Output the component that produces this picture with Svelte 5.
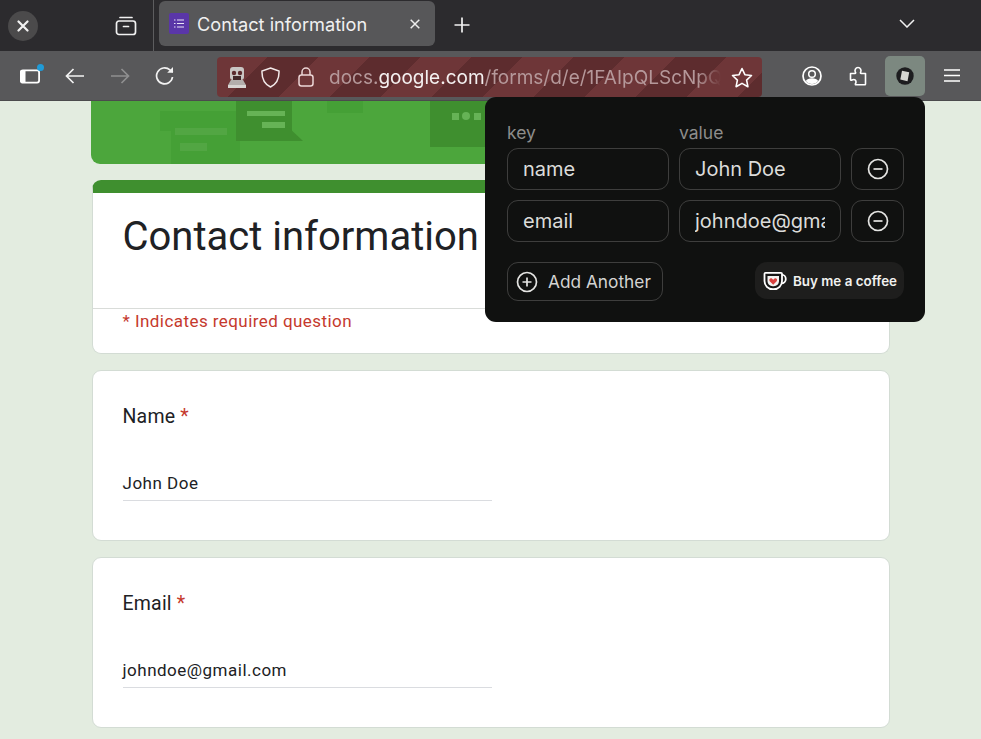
<script>
  const rows = [
    { key: 'name', value: 'John Doe' },
    { key: 'email', value: 'johndoe@gmail.com' }
  ];
  const questions = [
    { label: 'Name', answer: 'John Doe' },
    { label: 'Email', answer: 'johndoe@gmail.com' }
  ];
</script>

<div class="window">
  <header class="tabstrip">
    <div class="close-circle">
      <svg width="12" height="12" viewBox="0 0 12 12"><path d="M1.5 1.5l9 9M10.5 1.5l-9 9" stroke="#f2f2f2" stroke-width="2.2" stroke-linecap="round"/></svg>
    </div>
    <svg class="archive" width="22" height="20" viewBox="0 0 22 20" fill="none" stroke="#f1f1f1" stroke-width="1.7" stroke-linecap="round">
      <path d="M5 1.5h12"/>
      <rect x="1.5" y="5" width="19" height="13.5" rx="2.5"/>
      <path d="M8.5 10.5h5"/>
    </svg>
    <div class="sep"></div>
    <div class="tab">
      <div class="favicon">
        <svg width="10" height="9" viewBox="0 0 10 9" fill="none" stroke="#e9e3f7" stroke-width="1"><path d="M3 1h7M3 4.500h7M3 8h7M0 1h1.500M0 4.500h1.500M0 8h1.500"/></svg>
      </div>
      <span class="tab-title">Contact information</span>
      <svg class="tab-x" width="10" height="10" viewBox="0 0 10 10"><path d="M.7.7l8.600 8.600M9.300.7L.7 9.300" stroke="#ececec" stroke-width="1.500"/></svg>
    </div>
    <svg class="plus" width="16" height="16" viewBox="0 0 16 16"><path d="M8 .5v15M.5 8h15" stroke="#f1f1f1" stroke-width="1.700"/></svg>
    <svg class="chev" width="16" height="9" viewBox="0 0 16 9" fill="none"><path d="M1 1l7 7 7-7" stroke="#f1f1f1" stroke-width="1.500"/></svg>
  </header>

  <nav class="toolbar">
    <div class="side-icon">
      <svg width="26" height="22" viewBox="0 0 26 22" fill="none">
        <rect x="2.900" y="6.400" width="18.200" height="12.200" rx="2" stroke="#fff" stroke-width="1.800"/>
        <path d="M4 6h3.500v13H4a2 2 0 0 1-2-2V8a2 2 0 0 1 2-2z" fill="#fff"/>
        <circle cx="22.500" cy="3.500" r="3.500" fill="#1f9bd8"/>
      </svg>
    </div>
    <svg class="nav" width="20" height="16" viewBox="0 0 20 16" fill="none" stroke="#f2f2f2" stroke-width="1.700"><path d="M19 8H2M8.500 1L1.500 8l7 7"/></svg>
    <svg class="nav" width="20" height="16" viewBox="0 0 20 16" fill="none" stroke="#8f8f90" stroke-width="1.700"><path d="M1 8h17M11.500 1l7 7-7 7"/></svg>
    <svg class="nav" width="20" height="20" viewBox="0 0 20 20" fill="none" stroke="#f2f2f2" stroke-width="1.700"><path d="M17.500 11a8 8 0 1 1-2.600-7.100L17.800 6"/><path d="M18 1v5.800h-5.800" fill="#f2f2f2" stroke="none"/></svg>

    <div class="urlbar">
      <svg class="robot" width="22" height="24" viewBox="0 0 22 24">
        <rect x="4" y="2" width="14" height="13" rx="3" fill="#c9c6c4"/>
        <circle cx="8" cy="8" r="2.200" fill="#5b2b2e"/><circle cx="14" cy="8" r="2.200" fill="#5b2b2e"/>
        <rect x="7" y="11" width="8" height="6" fill="#42282a"/>
        <path d="M2 20h18v3H2z" fill="#d8d5d3"/><path d="M5 15h12l3 5H2z" fill="#b3aeac"/>
      </svg>
      <svg class="u-shield" width="19" height="21" viewBox="0 0 19 21" fill="none" stroke="#f3e9e9" stroke-width="1.500"><path d="M9.500 1L18 4c.3 7-1.500 12.500-8.500 16C2.500 16.500.7 11 1 4z"/></svg>
      <svg class="u-lock" width="16" height="20" viewBox="0 0 16 20" fill="none" stroke="#ecd6d6" stroke-width="1.500"><rect x="1" y="8" width="14" height="11" rx="2.500"/><path d="M4 8V5a4 4 0 0 1 8 0v3"/></svg>
      <div class="url"><span class="dim">docs.</span><span class="host">google.com</span><span class="dim">/forms/d/e/1FAIpQLScNpQ</span></div>
      <svg class="u-star" width="22" height="21" viewBox="0 0 22 21" fill="none" stroke="#fff" stroke-width="1.600" stroke-linejoin="round"><path d="M11 1.500l2.900 6.200 6.600.8-4.900 4.600 1.300 6.600L11 16.400l-5.900 3.300 1.300-6.600L1.500 8.500l6.600-.8z"/></svg>
    </div>

    <svg class="t-account" width="20" height="20" viewBox="0 0 20 20" fill="none"><circle cx="10" cy="10" r="9" stroke="#fff" stroke-width="1.700"/><circle cx="10" cy="8" r="3.300" stroke="#fff" stroke-width="1.500"/><path d="M3.800 15c1-2 3.400-2.800 6.200-2.800s5.200.8 6.200 2.800c-1.600 1.900-3.800 3-6.200 3s-4.600-1.100-6.200-3z" fill="#fff"/></svg>
    <svg class="t-ext" width="18" height="20" viewBox="0 0 18 20" fill="none" stroke="#fff" stroke-width="1.600" stroke-linejoin="round"><path d="M1.500 7.500H6c.8 0 .8-.8.300-1.500C5.500 4.500 6.500 1.500 9 1.500s3.500 3 2.700 4.500c-.4.700-.3 1.500.5 1.500h4.300V18a.8.8 0 0 1-.8.800H7c-.8 0-.8-.8-.3-1.500.8-1.300.1-3.800-1.800-3.800-.8 0-1.400.2-2 .5-.6.300-1.400.2-1.400-.5z"/></svg>
    <div class="active-ext">
      <svg width="18" height="18" viewBox="0 0 18 18"><circle cx="9" cy="9" r="8.700" fill="#1d1d1f"/><path d="M6 3.800l7.200 1.400-1.700 9-7.200-1.700z" fill="#d6d6d2"/></svg>
    </div>
    <svg class="t-menu" width="16" height="13" viewBox="0 0 16 13" stroke="#fff" stroke-width="1.500"><path d="M0 1h16M0 6.500h16M0 12h16"/></svg>
  </nav>

  <main class="page">
    <div class="column">
      <div class="banner">
        <svg width="799" height="63" viewBox="0 0 799 63">
          <path d="M69 10h80v53H80V30H69z" fill="#45a036"/>
          <rect x="145" y="0" width="56" height="40" fill="#3f8f2f"/>
          <path d="M196 25l16 15h-16z" fill="#3f8f2f"/>
          <rect x="156" y="10" width="38" height="5" fill="#66b356"/>
          <rect x="171" y="21" width="23" height="6" fill="#66b356"/>
          <rect x="84" y="27" width="52" height="7" fill="#52a643"/>
          <rect x="89" y="42" width="27" height="8" fill="#52a643"/>
          <rect x="236" y="0" width="36" height="12" fill="#45a036"/>
          <rect x="339" y="0" width="60" height="46" fill="#3f8f2f"/>
          <rect x="361" y="12" width="7" height="7" fill="#66b356"/>
          <circle cx="375" cy="15" r="4" fill="#66b356"/>
          <rect x="383" y="12" width="7" height="7" fill="#66b356"/>
        </svg>
      </div>

      <section class="card title-card">
        <h1>Contact information</h1>
        <div class="required-note"><span class="note-text">* Indicates required question</span></div>
      </section>

      {#each questions as q}
        <section class="card question">
          <div class="q-label">{q.label} <span class="star">*</span></div>
          <div class="answer">{q.answer}</div>
        </section>
      {/each}
    </div>
  </main>

  <aside class="popup">
    <div class="grid">
      <div class="col-label">key</div>
      <div class="col-label">value</div>
      <div></div>
      {#each rows as r}
        <div class="field"><span class="field-text">{r.key}</span></div>
        <div class="field"><span class="field-text">{r.value}</span></div>
        <div class="remove">
          <svg width="22" height="22" viewBox="0 0 22 22" fill="none" stroke="#e4e4e2" stroke-width="1.700"><circle cx="11" cy="11" r="9.500"/><path d="M6.500 11h9"/></svg>
        </div>
      {/each}
    </div>
    <div class="actions">
      <div class="add">
        <svg width="22" height="22" viewBox="0 0 22 22" fill="none" stroke="#e4e4e2" stroke-width="1.700"><circle cx="11" cy="11" r="9.500"/><path d="M6.500 11h9M11 6.500v9"/></svg>
        <span>Add Another</span>
      </div>
      <div class="coffee">
        <svg width="25" height="20" viewBox="0 0 25 20" fill="none">
          <circle cx="18.500" cy="8" r="4.300" stroke="#fff" stroke-width="1.800"/>
          <path d="M2.500 1.800h15.500c.6 0 1 .4 1 1v7.200c0 4.500-3.500 8.200-8.200 8.200h-1C5 18.200 1.500 14.500 1.500 10V2.800c0-.6.400-1 1-1z" fill="#161616" stroke="#fff" stroke-width="1.800"/>
          <path d="M4.500 5h11.500v5c0 3-2.300 5.200-5.200 5.200H9.700C6.800 15.200 4.500 13 4.500 10z" fill="#f3f3f1"/>
          <path d="M10.200 13.800L6.700 10.200c-1.400-1.800.9-3.800 2.400-2.400l1.100 1 1.100-1c1.500-1.400 3.800.6 2.400 2.400z" fill="#d8413f"/>
        </svg>
        <span>Buy me a coffee</span>
      </div>
    </div>
  </aside>
</div>

<style>
  :global(body) {
    margin: 0;
    background: #e3ece0;
  }
  .window {
    position: relative;
    width: 981px;
    height: 739px;
    overflow: hidden;
    font-family: Inter, "Liberation Sans", sans-serif;
  }

  .tabstrip {
    height: 51px;
    background: #2c2b2e;
    display: flex;
    align-items: center;
    box-sizing: border-box;
  }
  .close-circle {
    width: 30px;
    height: 30px;
    margin-left: 8px;
    border-radius: 50%;
    background: #4b4a4b;
    display: flex;
    align-items: center;
    justify-content: center;
  }
  .archive { margin-left: 77px; }
  .sep {
    width: 1px;
    height: 51px;
    margin-left: 16px;
    background: #5d5d5f;
  }
  .tab {
    width: 276px;
    height: 45px;
    margin: -4px 0 0 5px;
    background: #575759;
    border-radius: 6px;
    display: flex;
    align-items: center;
    box-sizing: border-box;
    padding-left: 10px;
  }
  .favicon {
    width: 20px;
    height: 21px;
    background: #5a36a8;
    border-radius: 2px;
    display: flex;
    align-items: center;
    justify-content: center;
  }
  .tab-title {
    margin-left: 8px;
    color: #f0f0f0;
    font-size: 18.200px;
    white-space: nowrap;
  }
  .tab-x { margin-left: auto; margin-right: 15px; }
  .plus { margin-left: 19px; margin-top: -2px; }
  .chev { margin-left: auto; margin-right: 66px; margin-top: -5px; }

  .toolbar {
    height: 50px;
    background: #58585a;
    display: flex;
    align-items: center;
    box-sizing: border-box;
    border-bottom: 1px solid #4b4b4d;
  }
  .side-icon { margin-left: 18px; height: 22px; margin-top: -2px; }
  .side-icon + .nav { margin-left: 21px; }
  .side-icon + .nav + .nav { margin-left: 25px; }
  .side-icon + .nav + .nav + .nav { margin-left: 25px; margin-right: 42px; }

  .urlbar {
    width: 545px;
    height: 40px;
    margin-top: 3px;
    border-radius: 4px;
    display: flex;
    align-items: center;
    box-sizing: border-box;
    background: repeating-linear-gradient(135deg, #6e3638 0 36px, #5d2c2e 36px 72px);
  }
  .robot { margin-left: 9px; }
  .u-shield { margin-left: 13px; }
  .u-lock { margin-left: 18px; }
  .url {
    margin-left: 15px;
    width: 392px;
    overflow: hidden;
    white-space: nowrap;
    font-size: 19px;
    -webkit-mask-image: linear-gradient(90deg, #000 94%, transparent 100%);
    mask-image: linear-gradient(90deg, #000 94%, transparent 100%);
  }
  .dim { color: #b5989a; }
  .host { color: #f4f0f0; }
  .u-star { margin-left: 10px; }

  .t-account { margin-left: 40px; }
  .t-ext { margin-left: 27px; margin-top: 1px; }
  .active-ext {
    width: 40px;
    height: 40px;
    margin-left: 18px;
    margin-top: 1px;
    background: #7c8880;
    border-radius: 5px;
    display: flex;
    align-items: center;
    justify-content: center;
  }
  .t-menu { margin-left: 19px; }

  .page { display: flex; justify-content: center; }
  .column {
    width: 799px;
    margin-right: 1px;
    display: flex;
    flex-direction: column;
    gap: 16px;
  }
  .banner {
    height: 63px;
    background: #4ca63c;
    border-radius: 0 0 9px 9px;
    overflow: hidden;
  }
  .banner svg { display: block; }

  .card {
    background: #fff;
    border: 1px solid #d3dcd4;
    border-radius: 9px;
    box-sizing: border-box;
    font-family: Roboto, "Liberation Sans", sans-serif;
  }
  .title-card {
    height: 174px;
    border-top: 13px solid #3f8f2f;
    margin-left: 1px;
    display: flex;
    flex-direction: column;
  }
  h1 {
    margin: 0;
    height: 116px;
    box-sizing: border-box;
    padding: 19px 0 0 30px;
    border-bottom: 1px solid #d9dcd9;
    font-weight: 400;
    font-size: 40px;
    line-height: 50px;
    color: #202124;
  }
  .required-note { padding: 0 0 0 30px; }
  .note-text {
    color: #c5392d;
    font-size: 17px;
    letter-spacing: 0.44px;
    line-height: 24px;
  }
  .question {
    height: 171px;
    margin-left: 1px;
    padding: 33px 0 0 30px;
  }
  .q-label {
    color: #202124;
    font-size: 19.500px;
    line-height: 26px;
    letter-spacing: 0.2px;
  }
  .star { color: #c5392d; }
  .answer {
    margin-top: 38px;
    width: 369px;
    height: 33px;
    box-sizing: border-box;
    border-bottom: 1px solid #dadce0;
    color: #202124;
    font-size: 17px;
    letter-spacing: 0.5px;
    line-height: 26px;
    padding-top: 2px;
  }

  .popup {
    position: absolute;
    left: 485px;
    top: 97px;
    width: 440px;
    height: 225px;
    box-sizing: border-box;
    background: #101110;
    border-radius: 11px;
    padding: 26px 21px 0 22px;
  }
  .grid {
    display: grid;
    grid-template-columns: 162px 162px 53px;
    column-gap: 10px;
    row-gap: 10px;
    grid-template-rows: 15px;
    grid-auto-rows: 42px;
  }
  .col-label {
    color: #8d8d8b;
    font-size: 17.500px;
    line-height: 20px;
  }
  .field {
    border: 1px solid #3e3e3d;
    border-radius: 11px;
    box-sizing: border-box;
    padding: 0 15px;
    display: flex;
    align-items: center;
    color: #dcdcda;
    font-size: 20px;
    min-width: 0;
  }
  .field-text {
    display: block;
    overflow: hidden;
    white-space: nowrap;
    width: 100%;
  }
  .remove {
    border: 1px solid #3e3e3d;
    border-radius: 11px;
    box-sizing: border-box;
    display: flex;
    align-items: center;
    justify-content: center;
  }
  .actions {
    display: flex;
    justify-content: space-between;
    margin-top: 20px;
  }
  .add {
    width: 156px;
    height: 39px;
    border: 1px solid #3e3e3d;
    border-radius: 11px;
    box-sizing: border-box;
    display: flex;
    align-items: center;
    padding-left: 8px;
    gap: 10px;
    color: #d4d4d2;
    font-size: 17.300px;
    white-space: nowrap;
  }
  .coffee {
    width: 149px;
    height: 37px;
    background: #1e1e1d;
    border-radius: 12px;
    box-sizing: border-box;
    display: flex;
    align-items: center;
    padding-left: 8px;
    gap: 5px;
    color: #f1f1ef;
    font-size: 13.400px;
    font-weight: 600;
    white-space: nowrap;
  }
</style>
